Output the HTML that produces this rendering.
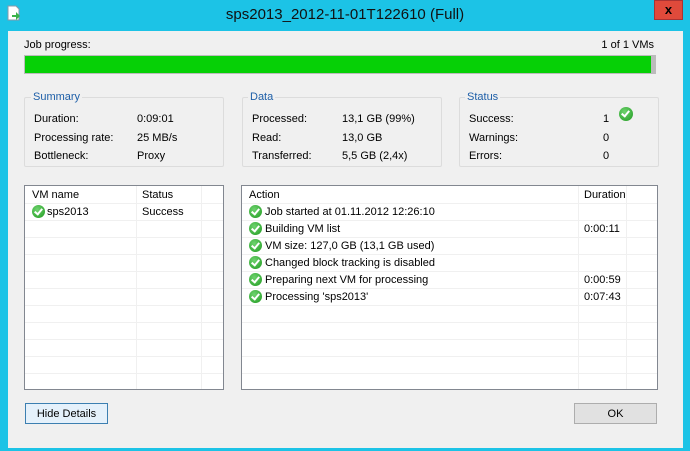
<!DOCTYPE html><html><head><style>
body{margin:0;width:690px;height:451px;background:#1cc3e6;position:relative;overflow:hidden;font-family:"Liberation Sans",sans-serif;font-size:11px;color:#000}
.a{position:absolute}
.client{left:8px;top:31px;width:675px;height:417px;background:#f0f0f0}
.grp{border:1px solid #dcdcdc;border-radius:2px}
.gt{color:#1e5fa8;background:#f0f0f0;padding:0 2px}
.grid{background:#fff;border:1px solid #828790;overflow:hidden}
.rl{position:absolute;left:0;right:0;height:1px;background:#f0f0f0}
.cl{position:absolute;top:0;bottom:0;width:1px;background:#f0f0f0}
.ok{display:inline-block;width:13px;height:13px;border-radius:50%;background:radial-gradient(circle at 40% 35%,#6fd36f,#1f9a1f);position:absolute}
.ok:after{content:"";position:absolute;left:4px;top:2px;width:3px;height:6px;border:solid #fff;border-width:0 2px 2px 0;transform:rotate(40deg)}
.btn{border:1px solid #adadad;background:#e1e1e1;text-align:center;line-height:20px}
</style></head><body>
<svg class="a" style="left:7px;top:5px" width="14" height="16"><path d="M1 1h8l3 3v11H1z" fill="#fff" stroke="#8899aa"/><path d="M5 10h4v-3l4 4-4 4v-3H5z" fill="#3bb34a"/></svg>
<div class="a" style="left:0;width:690px;top:6px;text-align:center;font-size:15px;color:#111">sps2013_2012-11-01T122610 (Full)</div>
<div class="a" style="left:654px;top:0;width:29px;height:20px;background:#e04a3b;border:1px solid #a33;box-sizing:border-box;text-align:center;font-weight:bold;font-size:13px;line-height:18px">x</div>
<div class="a client"></div>
<div class="a" style="left:24px;top:39px">Job progress:</div>
<div class="a" style="left:580px;top:39px;width:74px;text-align:right">1 of 1 VMs</div>
<div class="a" style="left:24px;top:55px;width:632px;height:19px;background:#bcbcbc;border:1px solid #bcbcbc;box-sizing:border-box"><div style="width:626px;height:17px;background:#06d006"></div></div>

<div class="a grp" style="left:24px;top:97px;width:198px;height:68px"></div>
<div class="a gt" style="left:31px;top:91px">Summary</div>
<div class="a" style="left:34px;top:110px;line-height:18.5px">Duration:<br>Processing rate:<br>Bottleneck:</div>
<div class="a" style="left:137px;top:110px;line-height:18.5px">0:09:01<br>25 MB/s<br>Proxy</div>

<div class="a grp" style="left:242px;top:97px;width:198px;height:68px"></div>
<div class="a gt" style="left:248px;top:91px">Data</div>
<div class="a" style="left:252px;top:110px;line-height:18.5px">Processed:<br>Read:<br>Transferred:</div>
<div class="a" style="left:342px;top:110px;line-height:18.5px">13,1 GB (99%)<br>13,0 GB<br>5,5 GB (2,4x)</div>

<div class="a grp" style="left:459px;top:97px;width:198px;height:68px"></div>
<div class="a gt" style="left:465px;top:91px">Status</div>
<div class="a" style="left:469px;top:110px;line-height:18.5px">Success:<br>Warnings:<br>Errors:</div>
<div class="a" style="left:603px;top:110px;line-height:18.5px">1<br>0<br>0</div>
<span class="ok" style="left:619px;top:107px;width:14px;height:14px"></span>

<div class="a grid" style="left:24px;top:185px;width:198px;height:203px">
<div class="cl" style="left:111px"></div><div class="cl" style="left:176px"></div>
<div class="rl" style="top:17px"></div><div class="rl" style="top:34px"></div><div class="rl" style="top:51px"></div><div class="rl" style="top:68px"></div><div class="rl" style="top:85px"></div><div class="rl" style="top:102px"></div><div class="rl" style="top:119px"></div><div class="rl" style="top:136px"></div><div class="rl" style="top:153px"></div><div class="rl" style="top:170px"></div><div class="rl" style="top:187px"></div>
<div class="a" style="left:7px;top:3px">VM name</div><div class="a" style="left:117px;top:3px">Status</div>
<span class="ok" style="left:7px;top:19px"></span><div class="a" style="left:22px;top:20px">sps2013</div><div class="a" style="left:117px;top:20px">Success</div>
</div>

<div class="a grid" style="left:241px;top:185px;width:415px;height:203px">
<div class="cl" style="left:336px"></div><div class="cl" style="left:384px"></div>
<div class="rl" style="top:17px"></div><div class="rl" style="top:34px"></div><div class="rl" style="top:51px"></div><div class="rl" style="top:68px"></div><div class="rl" style="top:85px"></div><div class="rl" style="top:102px"></div><div class="rl" style="top:119px"></div><div class="rl" style="top:136px"></div><div class="rl" style="top:153px"></div><div class="rl" style="top:170px"></div><div class="rl" style="top:187px"></div>
<div class="a" style="left:7px;top:3px">Action</div><div class="a" style="left:342px;top:3px">Duration</div>
<span class="ok" style="left:7px;top:19px"></span><div class="a" style="left:23px;top:20px">Job started at 01.11.2012 12:26:10</div>
<span class="ok" style="left:7px;top:36px"></span><div class="a" style="left:23px;top:37px">Building VM list</div><div class="a" style="left:342px;top:37px">0:00:11</div>
<span class="ok" style="left:7px;top:53px"></span><div class="a" style="left:23px;top:54px">VM size: 127,0 GB (13,1 GB used)</div>
<span class="ok" style="left:7px;top:70px"></span><div class="a" style="left:23px;top:71px">Changed block tracking is disabled</div>
<span class="ok" style="left:7px;top:87px"></span><div class="a" style="left:23px;top:88px">Preparing next VM for processing</div><div class="a" style="left:342px;top:88px">0:00:59</div>
<span class="ok" style="left:7px;top:104px"></span><div class="a" style="left:23px;top:105px">Processing 'sps2013'</div><div class="a" style="left:342px;top:105px">0:07:43</div>
</div>

<div class="a btn" style="left:25px;top:403px;width:81px;height:19px;border-color:#3c7fb1;background:#e5f1fb">Hide Details</div>
<div class="a btn" style="left:574px;top:403px;width:81px;height:19px">OK</div>
</body></html>
